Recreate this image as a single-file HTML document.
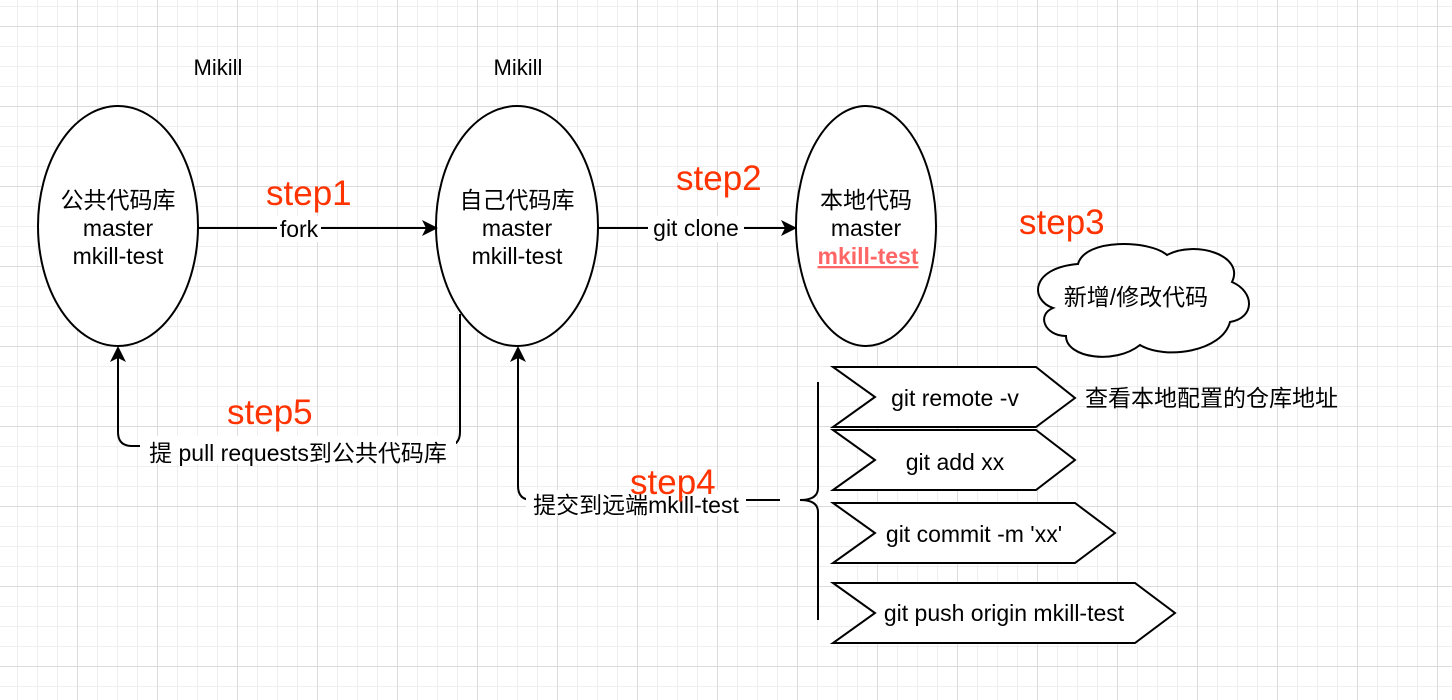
<!DOCTYPE html>
<html><head><meta charset="utf-8"><style>
html,body{margin:0;padding:0;width:1452px;height:700px;overflow:hidden;background:#fff}
svg text{font-family:"Liberation Sans","Noto Sans CJK SC",sans-serif}
</style></head><body>
<svg width="1452" height="700" xmlns="http://www.w3.org/2000/svg">
<defs>
<pattern id="minor" width="20" height="20" patternUnits="userSpaceOnUse" x="-3" y="6"><path d="M0 0.5H20M0.5 0V20" stroke="#efefef" stroke-width="1" fill="none"/></pattern>
<pattern id="major" width="80" height="80" patternUnits="userSpaceOnUse" x="-3" y="26"><path d="M0 0.5H80M0.5 0V80" stroke="#dcdcdc" stroke-width="1" fill="none"/></pattern>
<marker id="ar" markerWidth="16" markerHeight="16" refX="14" refY="8" orient="auto" markerUnits="userSpaceOnUse"><path d="M0 0L16 8L0 16L4 8Z" fill="#000"/></marker>
</defs>
<rect width="1452" height="700" fill="url(#minor)"/>
<rect width="1452" height="700" fill="url(#major)"/>
<g fill="#fff" stroke="#000" stroke-width="2">
<ellipse cx="118" cy="226" rx="80" ry="120"/>
<ellipse cx="517" cy="226" rx="81" ry="120"/>
<ellipse cx="866" cy="226" rx="70" ry="120"/>
<path d="M1053 308 C1030 300 1030 268 1078 264 C1085 238 1150 240 1167 255 C1195 240 1245 255 1232 282 C1255 292 1255 318 1230 322 C1222 352 1165 360 1140 345 C1115 365 1066 358 1066 336 C1045 336 1036 315 1053 308 Z"/>
<path d="M833 367H1036L1075 398L1036 427H833L875 397Z"/>
<path d="M833 430H1036L1075 460L1036 490H833L875 460Z"/>
<path d="M833 503H1075L1115 533L1075 563H833L875 533Z"/>
<path d="M833 583H1135L1175 613L1135 643H833L875 613Z"/>
</g>
<g stroke="#000" stroke-width="2" fill="none">
<path d="M198 228H436" marker-end="url(#ar)"/>
<path d="M598 228H795" marker-end="url(#ar)"/>
<path d="M460 314V432Q460 446 446 446H132Q118 446 118 432V348" marker-end="url(#ar)"/>
<path d="M780 500H532Q518 500 518 486V348" marker-end="url(#ar)"/>
<path d="M818 382V488Q818 500 800 500Q818 500 818 512V620"/>
</g>
<g font-size="23" text-anchor="middle" fill="#000">
<text x="218" y="75" font-size="22">Mikill</text>
<text x="518" y="75" font-size="22">Mikill</text>
<text x="118" y="208">公共代码库</text>
<text x="118" y="236">master</text>
<text x="118" y="264">mkill-test</text>
<text x="517" y="208">自己代码库</text>
<text x="517" y="236">master</text>
<text x="517" y="264">mkill-test</text>
<text x="866" y="208">本地代码</text>
<text x="866" y="236">master</text>
<text x="868" y="264" fill="#ff6666" font-weight="bold" text-decoration="underline">mkill-test</text>
<rect x="277" y="216" width="44" height="26" fill="#fff" stroke="none"/>
<text x="299" y="237">fork</text>
<rect x="648" y="216" width="96" height="26" fill="#fff" stroke="none"/>
<text x="696" y="236">git clone</text>
<text x="1136" y="305">新增/修改代码</text>
<text x="955" y="406">git remote -v</text>
<text x="955" y="470">git add xx</text>
<text x="974" y="542">git commit -m 'xx'</text>
<text x="1004" y="621">git push origin mkill-test</text>
<text x="1085" y="406" text-anchor="start">查看本地配置的仓库地址</text>
<rect x="140" y="436" width="316" height="28" fill="#fff" stroke="none"/>
<text x="298" y="461">提 pull requests到公共代码库</text>
<rect x="526" y="490" width="220" height="26" fill="#fff" stroke="none"/>
<text x="636" y="513">提交到远端mkill-test</text>
</g>
<g font-size="35" fill="#ff3300">
<text x="266" y="205">step1</text>
<text x="676" y="190">step2</text>
<text x="1019" y="234">step3</text>
<text x="630" y="494">step4</text>
<text x="227" y="424">step5</text>
</g>
</svg>
</body></html>
